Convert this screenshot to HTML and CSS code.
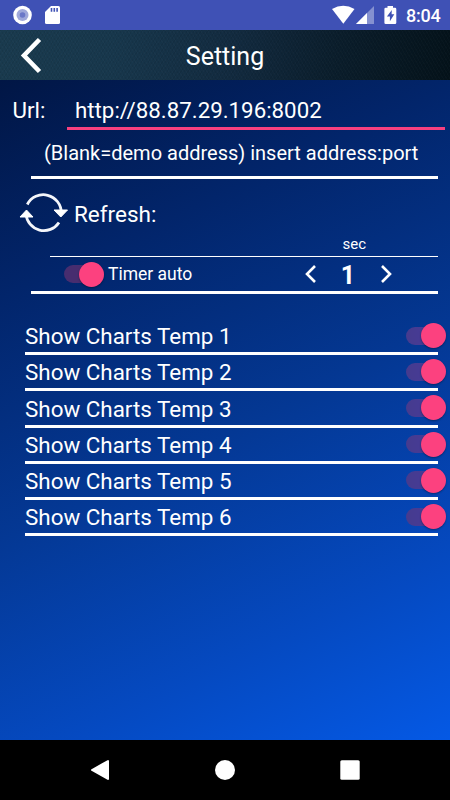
FILE: index.html
```html
<!DOCTYPE html>
<html lang="en">
<head>
<meta charset="utf-8">
<title>Setting</title>
<link rel="stylesheet" href="styles.css">
</head>
<body>
<div class="status">
  <svg class="status-left" width="75" height="30" viewBox="0 0 75 30">
    <circle cx="22.5" cy="15" r="9.3" fill="#fff"/>
    <circle cx="22.5" cy="15" r="6" fill="#9fa8da"/>
    <circle cx="22.5" cy="15" r="2.8" fill="#6b78c8"/>
    <path d="M51 6h7.500q1.500 0 1.500 1.500v15q0 1.500-1.500 1.500h-12q-1.500 0-1.500-1.500V12z" fill="#fff"/>
    <path d="M51.500 8v3.700M54.300 8v3.700M57.100 8v3.700" stroke="#3f51b5" stroke-width="1.600"/>
  </svg>
  <svg class="status-right" width="76" height="30" viewBox="330 0 76 30">
    <path d="M332 9Q343.300 2.500 354.500 9L343.300 23.700z" fill="#fff"/>
    <path d="M374 6v18h-18z" fill="#8591d0"/>
    <path d="M367 13v11h-11z" fill="#fff"/>
    <path d="M387.500 6h5.500v1.800h2q1.300 0 1.300 1.300v13.600q0 1.300-1.300 1.300h-9.300q-1.300 0-1.300-1.300V9.100q0-1.300 1.300-1.300h1.800z" fill="#fff"/>
    <path d="M391.800 10l-4.900 6.600h3v4.700l4.400-7h-2.700z" fill="#3f51b5"/>
  </svg>
  <span class="clock">8:04</span>
</div>
<header class="header">
  <svg class="back" width="44" height="50" viewBox="0 30 44 50"><path d="M39.500 39.500L24 55.500L39.500 71.500" fill="none" stroke="#fff" stroke-width="4.600"/></svg>
  <h1 class="title">Setting</h1>
</header>
<main class="content">
  <div class="url-row">
    <label class="url-label">Url:</label>
    <div class="url-input">http://88.87.29.196:8002</div>
  </div>
  <div class="hint">(Blank=demo address) insert address:port</div>
  <div class="refresh">
    <svg width="50" height="46" viewBox="19 190 50 46">
      <path d="M27.300 204.500A18 18 0 0 1 61.300 213M59 222.500A18 18 0 0 1 26 214" fill="none" stroke="#f4f6fb" stroke-width="2.800"/>
      <path d="M54 210h13.500l-6.700 7zM20 217h13l-6.500-7z" fill="#fff" stroke="#fff" stroke-linejoin="round"/>
    </svg>
    <span class="refresh-label">Refresh:</span>
  </div>
  <div class="unit">sec</div>
  <div class="timer">
    <span class="switch"></span>
    <span class="timer-label">Timer auto</span>
    <div class="stepper">
      <svg width="14" height="20" viewBox="0 0 14 20"><path d="M12 2L4 10l8 8" fill="none" stroke="#fff" stroke-width="2.600"/></svg>
      <span class="value">1</span>
      <svg width="14" height="20" viewBox="0 0 14 20"><path d="M2 2l8 8l-8 8" fill="none" stroke="#fff" stroke-width="2.600"/></svg>
    </div>
  </div>
  <div class="charts">
    <div class="chart-row"><span class="name">Show Charts Temp 1</span><span class="switch"></span></div>
    <div class="chart-row"><span class="name">Show Charts Temp 2</span><span class="switch"></span></div>
    <div class="chart-row"><span class="name">Show Charts Temp 3</span><span class="switch"></span></div>
    <div class="chart-row"><span class="name">Show Charts Temp 4</span><span class="switch"></span></div>
    <div class="chart-row"><span class="name">Show Charts Temp 5</span><span class="switch"></span></div>
    <div class="chart-row"><span class="name">Show Charts Temp 6</span><span class="switch"></span></div>
  </div>
</main>
<nav class="nav">
  <svg width="20" height="22" viewBox="0 0 20 22"><path d="M2 11L18 2v18z" fill="#fff" stroke="#fff" stroke-width="2" stroke-linejoin="round"/></svg>
  <svg width="20" height="22" viewBox="0 0 20 22"><circle cx="10" cy="11" r="10" fill="#fff"/></svg>
  <svg width="20" height="22" viewBox="0 0 20 22"><rect x=".3" y="1.300" width="19.400" height="19.400" rx="1.500" fill="#fff"/></svg>
</nav>
</body>
</html>
```
FILE: styles.css
```css
* { box-sizing: border-box; }
body {
  margin: 0;
  width: 450px;
  height: 800px;
  overflow: hidden;
  display: flex;
  flex-direction: column;
  font-family: Roboto, "Liberation Sans", sans-serif;
  color: #fff;
  white-space: nowrap;
}
svg { display: block; flex: none; }
.status {
  height: 30px;
  display: flex;
  align-items: center;
  background: #3f51b5;
}
.status-right { margin-left: auto; }
.clock { width: 44px; font-size: 18px; font-weight: 500; line-height: 30px; padding: 1px 0 0 0; letter-spacing: -.2px; }
.header {
  height: 50px;
  display: grid;
  grid-template-columns: 44px 1fr 44px;
  background:
    repeating-linear-gradient(60deg, rgba(255,255,255,.015) 0 1px, transparent 1px 3px),
    repeating-linear-gradient(120deg, rgba(0,0,0,.06) 0 1px, transparent 1px 3px),
    linear-gradient(97deg, #193a4e 0%, #17374c 25%, #122a3f 52%, #0a1d2b 75%, #04121a 100%);
}
.title {
  margin: 0;
  text-align: center;
  font-size: 25px;
  font-weight: 400;
  line-height: 53px;
}
.content {
  height: 660px;
  background: linear-gradient(155deg, #011645 0%, #02256b 25%, #043894 53%, #054ac2 80%, #0559e5 100%);
}
.url-row {
  display: flex;
  height: 50px;
  padding: 0 5px 0 12.500px;
}
.url-label { width: 54.500px; font-size: 22.3px; line-height: 61px; }
.url-input {
  flex: 1;
  padding-left: 8px;
  border-bottom: 3px solid #f7407f;
  font-size: 22.3px;
  line-height: 60px;
}
.hint {
  margin: 0 12px 0 31px;
  height: 48.500px;
  border-bottom: 3px solid #fff;
  padding-left: 13px;
  font-size: 20px;
  line-height: 46px;
}
.refresh {
  height: 46px;
  margin: 11.500px 0 0 19px;
  display: flex;
}
.refresh-label { padding-left: 5px; font-size: 22.5px; line-height: 48px; }
.unit {
  margin: 0 12px 0 50px;
  height: 21px;
  padding-left: 292.500px;
  border-bottom: 1.500px solid #fff;
  font-size: 15px;
  line-height: 16px;
}
.timer {
  margin: 0 12px 0 31px;
  height: 37px;
  border-bottom: 3px solid #fff;
  padding-left: 33px;
  display: flex;
  align-items: center;
}
.timer-label { font-size: 17.500px; padding: 1px 0 0 4px; line-height: 33px; }
.stepper {
  margin-left: auto;
  margin-right: 44px;
  width: 91px;
  display: flex;
  align-items: center;
  justify-content: space-between;
}
.value { font-size: 25px; font-weight: 700; line-height: 30px; padding-top: 4px; margin-right: 1px; }
.switch {
  display: flex;
  justify-content: flex-end;
  align-items: center;
  width: 40px;
  height: 18px;
  border-radius: 9px;
  background: linear-gradient(90deg, #463b8e, #463b9a) left / 30px 18px no-repeat;
}
.timer .switch { background: #472d6f; }
.switch::after {
  content: "";
  flex: none;
  width: 25px;
  height: 25px;
  border-radius: 50%;
  background: #fc417f;
  box-shadow: 0 1px 2px rgba(0,0,0,.35);
}
.charts { margin: 25px 12px 0 25px; }
.chart-row {
  height: 36.200px;
  border-bottom: 3px solid #fff;
  display: flex;
  justify-content: space-between;
  align-items: center;
}
.chart-row .name { font-size: 22.4px; line-height: 31px; padding-top: 2.200px; }
.chart-row .switch { margin-right: -8px; }
.nav {
  height: 60px;
  background: #000;
  display: flex;
  align-items: center;
  justify-content: space-between;
  padding: 0 90px;
}
```
